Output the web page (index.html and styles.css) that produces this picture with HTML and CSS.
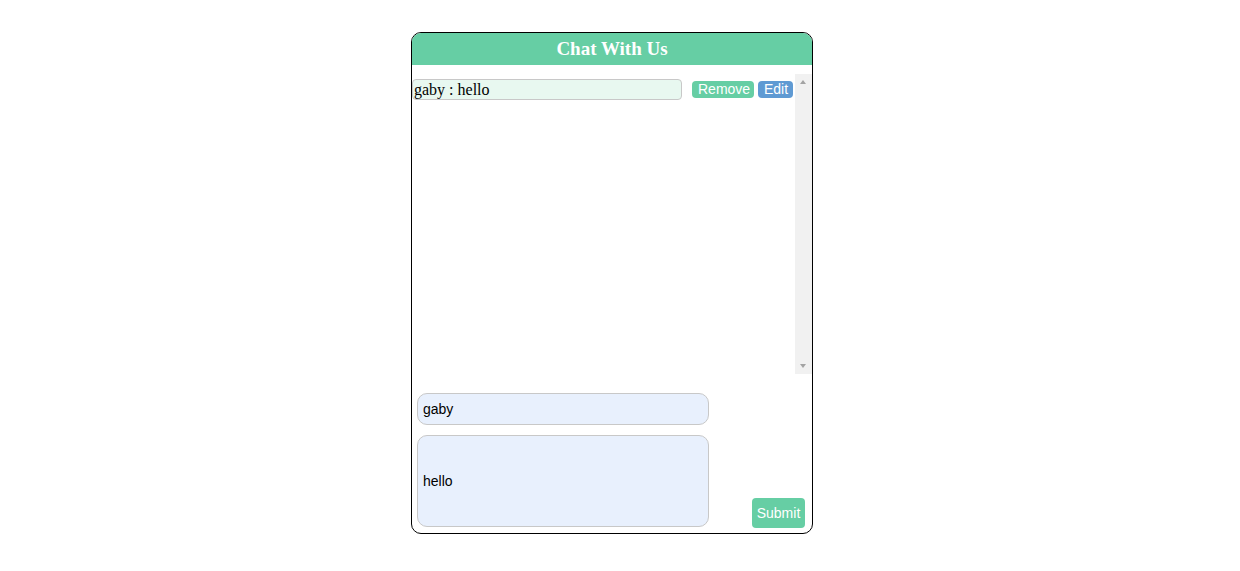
FILE: index.html
```html
<!DOCTYPE html>
<html>
<head>
<meta charset="utf-8">
<link rel="stylesheet" href="styles.css">
</head>
<body>
<div class="chat">
  <div class="chat-header">Chat With Us</div>
  <div class="messages">
    <div class="message-list">
      <div class="message">
        <input class="message-text" type="text" value="gaby : hello" readonly>
        <button class="btn btn-remove">Remove</button>
        <button class="btn btn-edit">Edit</button>
      </div>
    </div>
    <div class="scrollbar">
      <span class="arrow arrow-up"></span>
      <span class="arrow arrow-down"></span>
    </div>
  </div>
  <form class="chat-form">
    <div class="fields">
      <input class="field field-name" type="text" value="gaby">
      <input class="field field-msg" type="text" value="hello">
    </div>
    <button class="submit" type="button">Submit</button>
  </form>
</div>
</body>
</html>
```
FILE: styles.css
```css
html, body {
  margin: 0;
  padding: 0;
  background: #fff;
}
body {
  font-family: "Liberation Sans", Arial, sans-serif;
}
.chat {
  box-sizing: border-box;
  width: 402px;
  height: 502px;
  margin: 32px 0 0 411px;
  border: 1px solid #000;
  border-radius: 10px;
  overflow: hidden;
  display: flex;
  flex-direction: column;
}
.chat-header {
  height: 32px;
  background: #66cea4;
  color: #fff;
  font-family: "Liberation Serif", "Times New Roman", serif;
  font-weight: bold;
  font-size: 19px;
  line-height: 32px;
  text-align: center;
}
.messages {
  margin-top: 9px;
  height: 300px;
  display: flex;
}
.message-list {
  flex: 1;
}
.message {
  display: flex;
  align-items: center;
  margin-top: 5px;
}
.message-text {
  box-sizing: border-box;
  width: 270px;
  height: 21px;
  margin: 0;
  padding: 0 1px;
  border: 1px solid #c8c8c8;
  border-radius: 4px;
  background: #e8f8f0;
  font-family: "Liberation Serif", "Times New Roman", serif;
  font-size: 16px;
  color: #000;
  outline: none;
}
.btn {
  box-sizing: border-box;
  height: 17px;
  margin: 0;
  padding: 0 6px;
  border: none;
  border-radius: 4px;
  color: #fff;
  font-family: "Liberation Sans", Arial, sans-serif;
  font-size: 14px;
  line-height: 17px;
  cursor: pointer;
}
.btn-remove {
  width: 62px;
  margin-left: 10px;
  background: #66cea4;
}
.btn-edit {
  width: 35px;
  margin-left: 4px;
  background: #5f9ad3;
}
.scrollbar {
  width: 17px;
  background: #f1f1f1;
  position: relative;
}
.arrow {
  position: absolute;
  left: 5px;
  width: 0;
  height: 0;
  border-left: 3.5px solid transparent;
  border-right: 3.5px solid transparent;
}
.arrow-up {
  top: 6px;
  border-bottom: 4px solid #a3a3a3;
}
.arrow-down {
  bottom: 6px;
  border-top: 4px solid #a3a3a3;
}
.chat-form {
  margin: 0;
  padding: 19px 7px 0 5px;
  display: flex;
  align-items: flex-end;
  justify-content: space-between;
}
.fields {
  display: flex;
  flex-direction: column;
  gap: 10px;
}
.field {
  box-sizing: border-box;
  width: 292px;
  margin: 0;
  padding: 0 5px;
  border: 1px solid #c8c8c8;
  border-radius: 10px;
  background: #e8f0fd;
  font-family: "Liberation Sans", Arial, sans-serif;
  font-size: 14px;
  color: #000;
  outline: none;
}
.field-name {
  height: 32px;
}
.field-msg {
  height: 92px;
}
.submit {
  box-sizing: border-box;
  width: 53px;
  height: 30px;
  margin: 0 0 -1px;
  padding: 0;
  border: none;
  border-radius: 4px;
  background: #66cea4;
  color: #fff;
  font-family: "Liberation Sans", Arial, sans-serif;
  font-size: 14px;
  font-weight: normal;
  cursor: pointer;
}
```
